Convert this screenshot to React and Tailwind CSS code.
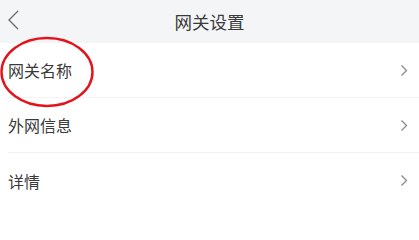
const items = ['网关名称', '外网信息', '详情'];

function Chevron() {
  return (
    <svg width="8" height="13" viewBox="0 0 8 13" fill="none">
      <path d="M1.5 1.5 L6.5 6.5 L1.5 11.5" stroke="#8a8a8a" strokeWidth="1.3" />
    </svg>
  );
}

export default function App() {
  return (
    <div
      className="relative w-[419px] h-[209px] overflow-hidden bg-white text-[#3a3a3a]"
      style={{ fontFamily: '"Noto Sans CJK SC", "Noto Sans", sans-serif' }}
    >
      {/* 头部 */}
      <div className="relative h-[43px] bg-[#f4f5f7] flex items-center justify-center">
        <button className="absolute left-[6px] top-[9px]">
          <svg width="14" height="22" viewBox="0 0 14 22" fill="none">
            <path d="M12 2 L3 11 L12 20" stroke="#707070" strokeWidth="1.4" />
          </svg>
        </button>
        <h1 className="text-[17.5px] leading-none text-[#3a3a3a]">网关设置</h1>
      </div>

      {/* 列表 */}
      <div className="flex flex-col">
        {items.map((label, i) => (
          <div key={label} className="pl-[8px]">
            <div
              className={
                'h-[55px] flex items-center justify-between pr-[11px] ' +
                (i < items.length - 1 ? 'border-b border-[#f3f3f3]' : '')
              }
            >
              <span className="text-[16px] leading-none">{label}</span>
              <Chevron />
            </div>
          </div>
        ))}
      </div>

      {/* 红圈标注 */}
      <svg
        className="absolute left-0 top-[35px] pointer-events-none"
        width="98"
        height="74"
        viewBox="0 0 98 74"
      >
        <ellipse cx="47" cy="37" rx="45.5" ry="34" fill="none" stroke="#e3121b" strokeWidth="2.4" />
      </svg>
    </div>
  );
}
